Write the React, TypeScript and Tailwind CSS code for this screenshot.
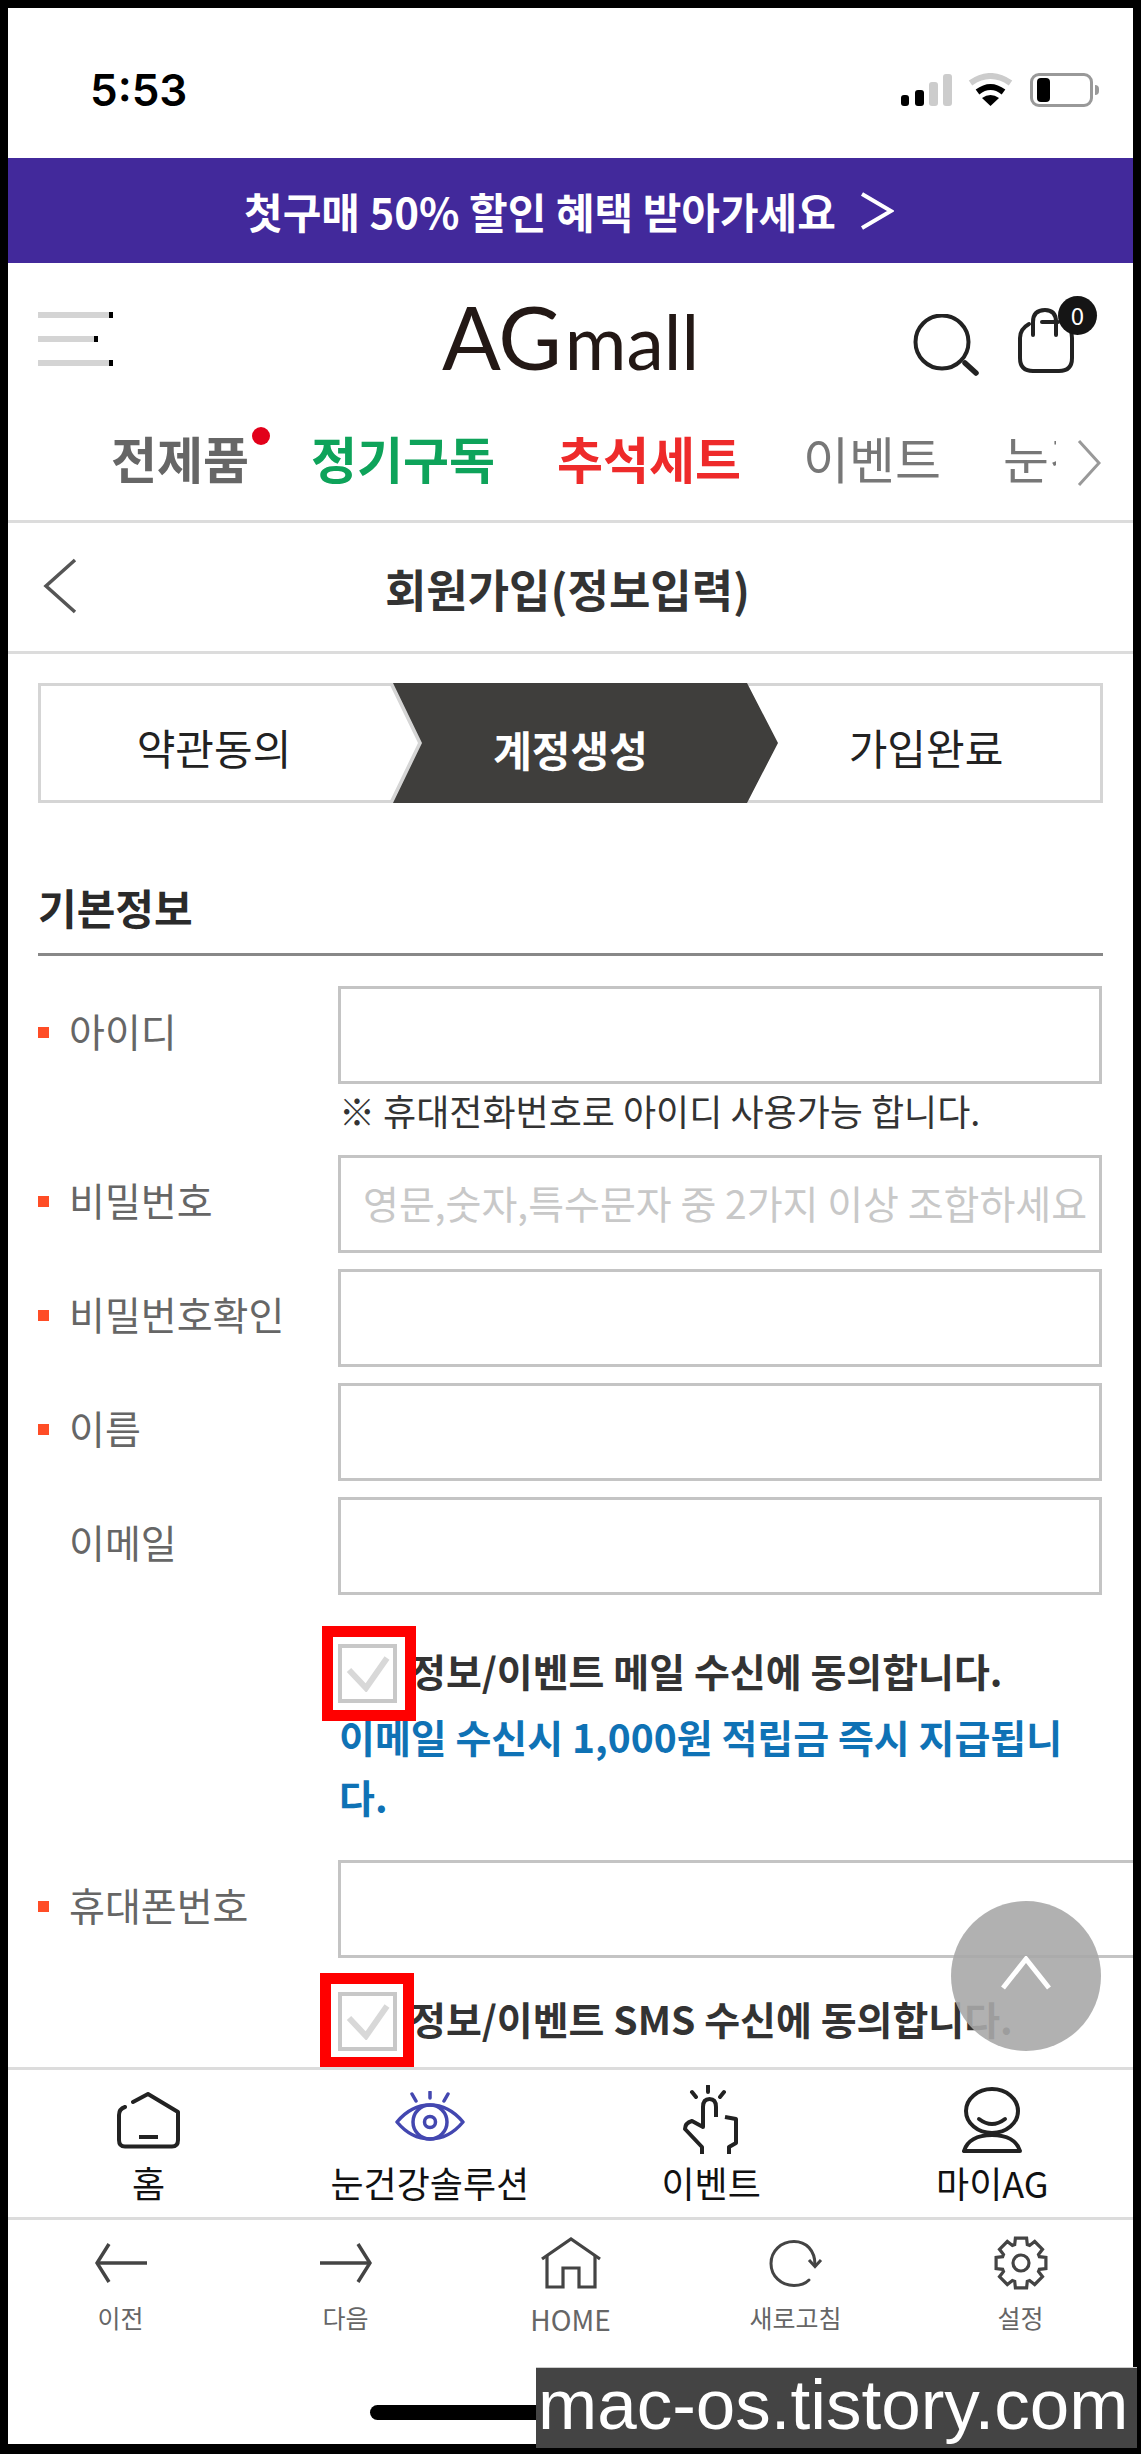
import React from 'react';

const FONT = '[font-family:"Noto_Sans_CJK_KR","Noto_Sans",sans-serif]';

const StatusIcons = () => (
  <div className="flex items-start">
    <svg width="52" height="34" viewBox="0 0 52 34">
      <rect x="0" y="22" width="8" height="11" rx="3" fill="#000" />
      <rect x="14" y="17" width="9" height="16" rx="3" fill="#000" />
      <rect x="28" y="9" width="9" height="24" rx="3" fill="#ccc" />
      <rect x="42" y="1" width="9" height="32" rx="3" fill="#ccc" />
    </svg>
    <svg className="ml-[15px]" width="45" height="34" viewBox="0 0 45 34">
      <path d="M2.5 10 Q22.5 -4 42.5 10" fill="none" stroke="#ccc" strokeWidth="6" />
      <path d="M9.5 19 Q22.5 9 35.5 19" fill="none" stroke="#000" strokeWidth="6" />
      <path d="M22.5 33 L14 25 Q22.5 19 31 25 Z" fill="#000" />
    </svg>
    <div className="ml-[17px] w-[63px] h-[34px] rounded-[9px] border-[3px] border-[#999] pl-[4px] py-[2px] flex">
      <div className="w-[13px] h-full rounded-[4px] bg-black" />
    </div>
    <div className="ml-[2px] mt-[12px] w-[4px] h-[10px] rounded-r-full bg-[#999]" />
  </div>
);

const Hamburger = () => (
  <div className="flex flex-col gap-[18px]">
    <div className="w-[75px] h-[6px] bg-[#d4d4d4] border-r-[4px] border-black" />
    <div className="w-[60px] h-[6px] bg-[#d4d4d4] border-r-[4px] border-black" />
    <div className="w-[75px] h-[6px] bg-[#d4d4d4] border-r-[4px] border-black" />
  </div>
);

const SearchIcon = () => (
  <svg className="mt-[9px]" width="66" height="62" viewBox="0 0 66 62" fill="none" stroke="#222">
    <circle cx="29" cy="28" r="26.5" strokeWidth="4" />
    <path d="M52 49 L63 59" strokeWidth="5.5" strokeLinecap="round" />
  </svg>
);

const BagIcon = () => (
  <div className="relative w-[56px] h-[65px] ml-[39px]">
    <svg width="56" height="65" viewBox="0 0 56 65" fill="none" stroke="#222" strokeWidth="4" strokeLinecap="round">
      <path d="M11 16 Q2 21 2 30 V50 Q2 63 15 63 H41 Q54 63 54 50 V30 Q54 21 48 16" />
      <path d="M15 27 V14 Q15 2 27 2 Q38 2 38 14 V27" />
      <path d="M24 14 H40" />
    </svg>
    <div className="absolute top-[-12px] left-[40px] w-[39px] h-[39px] rounded-full bg-[#151515] text-white text-[24px] leading-[38px] text-center">0</div>
  </div>
);

const STEP_SHAPE = '[clip-path:polygon(0_0,354px_0,385px_60px,354px_120px,0_120px,29px_60px)]';

const Steps = () => (
  <div className="flex h-[120px] mx-[30px] mt-[29px] border-[3px] border-[#d5d5d5] text-[42px]">
    <div className="w-[352px] shrink-0 flex items-center justify-center text-[#222] pr-[6px] pt-[7px]">약관동의</div>
    <div className="relative w-[385px] h-[120px] mt-[-3px] shrink-0">
      <div className={'absolute top-0 left-[-4px] w-[385px] h-[120px] bg-[#d5d5d5] ' + STEP_SHAPE} />
      <div className={'absolute top-0 left-0 w-[385px] h-[120px] bg-[#3f3e3c] flex items-center justify-center font-bold text-white pr-[30px] pt-[10px] ' + STEP_SHAPE}>계정생성</div>
    </div>
    <div className="flex-1 flex items-center justify-center text-[#222] pr-[26px] pt-[7px]">가입완료</div>
  </div>
);

const Field = ({ label, required, placeholder, wide }: { label: string; required?: boolean; placeholder?: string; wide?: boolean }) => (
  <div className="flex">
    <div className="w-[300px] shrink-0 flex items-center h-[98px] text-[39px] text-[#666]">
      <span className={required ? 'w-[11px] h-[11px] bg-[#ff4d26] mr-[20px] mt-[-6px]' : 'w-[11px] h-[11px] mr-[20px]'} />
      <span className="mt-[-10px]">{label}</span>
    </div>
    <div className={(wide ? 'w-[830px] shrink-0' : 'flex-1') + ' h-[98px] border-[3px] border-[#c4c4c4] flex items-center pl-[22px] pb-[4px] text-[39px] text-[#c8c8c8] whitespace-nowrap overflow-hidden'}>
      {placeholder}
    </div>
  </div>
);

const Agree = ({ text, boxClass }: { text: string; boxClass: string }) => (
  <div className="flex items-center ml-[300px]">
    <div className="relative w-[59px] h-[59px] shrink-0 border-[4px] border-[#c8c8c8]">
      <svg className="absolute left-[4px] top-[8px]" width="44" height="36" viewBox="0 0 44 36" fill="none" stroke="#d8d8d8" strokeWidth="6">
        <path d="M3 14 L20 32 L41 2" />
      </svg>
      <div className={'absolute border-[11px] border-[#ff0000] ' + boxClass} />
    </div>
    <span className="ml-[13px] mt-[-6px] text-[39px] font-semibold text-[#333] whitespace-nowrap">{text}</span>
  </div>
);

const HomeTabIcon = () => (
  <svg width="63" height="57" viewBox="0 0 63 57" fill="none" stroke="#222" strokeWidth="4" strokeLinecap="round" strokeLinejoin="round">
    <path d="M16 10 L31 2 L61 20 V48 Q61 54.5 55 54.5 H8 Q2 54.5 2 48 V23 Q2 17 8 15" />
    <path d="M22 45 H41" strokeLinecap="butt" />
  </svg>
);

const EyeIcon = () => (
  <svg className="mt-[-9px]" width="70" height="50" viewBox="0 0 70 50" fill="none" stroke="#4347b0" strokeWidth="3.5" strokeLinecap="round">
    <path d="M17 3 L21 10 M35 1 V7 M53 3 L49 10" />
    <path d="M2 31 C12 19 23 14 35 14 C47 14 58 19 68 31 C58 43 47 48 35 48 C23 48 12 43 2 31 Z" strokeLinejoin="round" />
    <circle cx="35" cy="31" r="17" />
    <circle cx="35" cy="31" r="5.5" />
  </svg>
);

const HandIcon = () => (
  <svg width="56" height="70" viewBox="0 0 56 70" fill="none" stroke="#222" strokeWidth="4" strokeLinejoin="round">
    <path d="M9 7 L13 12 M25 1 V7 M41 7 L37 12" strokeLinecap="round" />
    <path d="M33 32 V22 Q33 14 26.5 14 Q20 14 20 22 V42 L9 36 Q2 38 2 44 L19 62 V69" />
    <path d="M42 32 L53 34 V58 L46 62 V69" />
  </svg>
);

const UserIcon = () => (
  <svg width="60" height="66" viewBox="0 0 60 66" fill="none" stroke="#222" strokeWidth="4">
    <ellipse cx="30" cy="24" rx="26" ry="22" />
    <path d="M17 32 Q30 42 43 32" strokeLinecap="round" />
    <path d="M30 48 C15 48 5 54 2 64 H58 C55 54 45 48 30 48 Z" strokeLinejoin="round" />
  </svg>
);

const TabItem = ({ icon, label }: { icon: React.ReactNode; label: string }) => (
  <div className="flex-1 flex flex-col items-center">
    <div className="h-[74px] flex items-center justify-center">{icon}</div>
    <span className="mt-[2px] text-[36px] leading-[46px] text-[#111]">{label}</span>
  </div>
);

const BackIcon = ({ flip }: { flip?: boolean }) => (
  <svg className={flip ? 'scale-x-[-1]' : ''} width="52" height="40" viewBox="0 0 52 40" fill="none" stroke="#444" strokeWidth="3.5">
    <path d="M14 1 L2 20 L14 39" />
    <path d="M2 20 H52" />
  </svg>
);

const BrowserHome = () => (
  <svg width="60" height="52" viewBox="0 0 60 52" fill="none" stroke="#444" strokeWidth="3.2">
    <path d="M1 22 L30 2 L59 22" />
    <path d="M6 19 V50 H22 V31 H38 V50 H54 V19" />
  </svg>
);

const RefreshIcon = () => (
  <svg width="54" height="47" viewBox="0 0 54 47" fill="none" stroke="#444" strokeWidth="3">
    <path d="M46 25 C46 10 37 1.5 25 1.5 C12 1.5 2 11 2 23.5 C2 36 12 45.5 25 45.5 C31 45.5 36 44 40 40" strokeLinecap="round" />
    <path d="M40 20 L46 26.5 L52 20" />
  </svg>
);

// eight square teeth round the rim
const gearPath = () => {
  const pts: string[] = [];
  for (let i = 0; i < 8; i++) {
    const a = (i * Math.PI) / 4 - Math.PI / 2;
    const corners: [number, number][] = [[19.5, -0.33], [25.5, -0.22], [25.5, 0.22], [19.5, 0.33]];
    corners.forEach(([r, d]) => {
      pts.push((27 + r * Math.cos(a + d)).toFixed(1) + ' ' + (27 + r * Math.sin(a + d)).toFixed(1));
    });
  }
  return 'M' + pts.join(' L') + ' Z';
};

const GearIcon = () => (
  <svg width="54" height="54" viewBox="0 0 54 54" fill="none" stroke="#444" strokeWidth="3.2" strokeLinejoin="miter">
    <path d={gearPath()} />
    <circle cx="27" cy="27" r="8" />
  </svg>
);

const BrowserItem = ({ icon, label, labelClass }: { icon: React.ReactNode; label: string; labelClass: string }) => (
  <div className="flex-1 flex flex-col items-center">
    <div className="h-[58px] flex items-center justify-center">{icon}</div>
    <span className={'text-[#666] ' + labelClass}>{label}</span>
  </div>
);

export default function App() {
  return (
    <div className={'relative w-[1141px] h-[2454px] bg-black pt-[8px] px-[8px] pb-[10px] overflow-hidden ' + FONT}>
      <div className="flex flex-col h-full bg-white overflow-hidden">
        {/* status bar */}
        <div className="h-[150px] shrink-0 flex justify-between pt-[65px] pl-[82px] pr-[34px]">
          <span className="text-[44px] leading-[34px] font-semibold text-black [font-family:Inter,sans-serif]">5:53</span>
          <StatusIcons />
        </div>

        {/* promo banner */}
        <div className="h-[105px] shrink-0 bg-[#42299b] flex items-center justify-center text-white text-[42px] font-semibold">
          <span className="ml-[-3px]">첫구매 50% 할인 혜택 받아가세요</span>
          <svg className="ml-[24px]" width="34" height="38" viewBox="0 0 34 38" fill="none" stroke="#fff" strokeWidth="4">
            <path d="M2 2 L31 19 L2 36" />
          </svg>
        </div>

        {/* header */}
        <div className="h-[152px] shrink-0 grid grid-cols-[1fr_auto_1fr] items-center px-[30px]">
          <Hamburger />
          <div className="flex items-baseline text-[#231815] [font-family:Lato,sans-serif] font-normal">
            <span className="text-[87px] leading-[70px] tracking-[-1px]">AG</span>
            <span className="text-[75px] leading-[70px] ml-[4px]">mall</span>
          </div>
          <div className="flex items-center justify-end mr-[29px] mt-[3px]">
            <SearchIcon />
            <BagIcon />
          </div>
        </div>

        {/* category nav */}
        <div className="h-[108px] shrink-0 flex items-center pb-[22px] border-b-[3px] border-[#dcdcdc]">
          <div className="relative w-[1048px] pl-[103px] flex gap-[62px] overflow-hidden text-[50px] leading-[72px] whitespace-nowrap">
            <span className="font-bold text-[#666]">전제품</span>
            <span className="font-bold text-[#0ea35a]">정기구독</span>
            <span className="font-bold text-[#ee2a2a]">추석세트</span>
            <span className="text-[#777]">이벤트</span>
            <span className="text-[#777]">눈건강솔루션</span>
            <span className="absolute left-[244px] top-[6px] w-[18px] h-[18px] rounded-full bg-[#e2001a]" />
          </div>
          <svg className="ml-[21px] mt-[12px]" width="24" height="46" viewBox="0 0 24 46" fill="none" stroke="#999" strokeWidth="3">
            <path d="M2 1 L22 23 L2 45" />
          </svg>
        </div>

        {/* page title */}
        <div className="relative h-[131px] shrink-0 flex items-center justify-center pt-[3px] border-b-[3px] border-[#dcdcdc]">
          <svg className="absolute left-[35px] top-[35px]" width="34" height="56" viewBox="0 0 34 56" fill="none" stroke="#555" strokeWidth="3.5">
            <path d="M32 2 L3 28 L32 54" />
          </svg>
          <span className="text-[45px] font-bold text-[#333] ml-[-6px]">회원가입(정보입력)</span>
        </div>

        {/* form area */}
        <div className="relative flex-1 min-h-0 overflow-hidden">
          <Steps />

          <div className="mx-[30px] mt-[63px] pt-[13px] h-[90px] border-b-[3px] border-[#888] text-[42px] leading-[56px] font-bold text-[#2a2a2a]">기본정보</div>

          <div className="pl-[30px] pr-[31px] mt-[30px]">
            <Field label="아이디" required />
            <p className="ml-[301px] mt-[5px] h-[66px] text-[36px] leading-[42px] text-[#333] whitespace-nowrap">※ 휴대전화번호로 아이디 사용가능 합니다.</p>
            <div className="flex flex-col gap-[16px]">
              <Field label="비밀번호" required placeholder="영문,숫자,특수문자 중 2가지 이상 조합하세요" />
              <Field label="비밀번호확인" required />
              <Field label="이름" required />
              <Field label="이메일" />
            </div>
            <div className="mt-[49px]">
              <Agree text="정보/이벤트 메일 수신에 동의합니다." boxClass="left-[-20px] right-[-23px] top-[-22px] bottom-[-22px]" />
            </div>
            <p className="ml-[301px] mt-[3px] text-[39px] leading-[60px] font-bold text-[#0f72b5] whitespace-nowrap">
              이메일 수신시 1,000원 적립금 즉시 지급됩니
              <br />
              다.
            </p>
            <div className="mt-[34px]">
              <Field label="휴대폰번호" required wide />
            </div>
            <div className="mt-[34px]">
              <Agree text="정보/이벤트 SMS 수신에 동의합니다." boxClass="left-[-22px] right-[-21px] top-[-23px] bottom-[-21px]" />
            </div>
          </div>
        </div>

        {/* tab bar */}
        <div className="h-[153px] shrink-0 flex pt-[13px] border-t-[3px] border-b-[3px] border-[#dcdcdc]">
          <TabItem icon={<HomeTabIcon />} label="홈" />
          <TabItem icon={<EyeIcon />} label="눈건강솔루션" />
          <TabItem icon={<HandIcon />} label="이벤트" />
          <TabItem icon={<UserIcon />} label="마이AG" />
        </div>

        {/* browser toolbar */}
        <div className="h-[224px] shrink-0 flex pt-[14px]">
          <BrowserItem icon={<BackIcon />} label="이전" labelClass="mt-[7px] text-[25px] leading-[36px]" />
          <BrowserItem icon={<BackIcon flip />} label="다음" labelClass="mt-[7px] text-[25px] leading-[36px]" />
          <BrowserItem icon={<BrowserHome />} label="HOME" labelClass="mt-[9px] text-[28px] leading-[36px]" />
          <BrowserItem icon={<RefreshIcon />} label="새로고침" labelClass="mt-[7px] text-[25px] leading-[36px]" />
          <BrowserItem icon={<GearIcon />} label="설정" labelClass="mt-[7px] text-[25px] leading-[36px]" />
        </div>
      </div>

      {/* scroll to top */}
      <div className="absolute left-[951px] top-[1901px] w-[150px] h-[150px] rounded-full bg-[#a8a8a8]/90 flex items-center justify-center">
        <svg className="mt-[-6px]" width="50" height="34" viewBox="0 0 50 34" fill="none" stroke="#fff" strokeWidth="5">
          <path d="M2 32 L25 3 L48 32" />
        </svg>
      </div>

      {/* home indicator */}
      <div className="absolute left-[370px] top-[2405px] w-[402px] h-[15px] rounded-full bg-black" />

      {/* watermark */}
      <div className="absolute left-[536px] top-[2367px] w-[601px] h-[81px] bg-[#444] border-t-[1px] border-[#ccc] text-white text-[71px] leading-[74px] whitespace-nowrap [font-family:'Liberation_Sans',sans-serif] pl-[2px]">mac-os.tistory.com</div>
    </div>
  );
}
